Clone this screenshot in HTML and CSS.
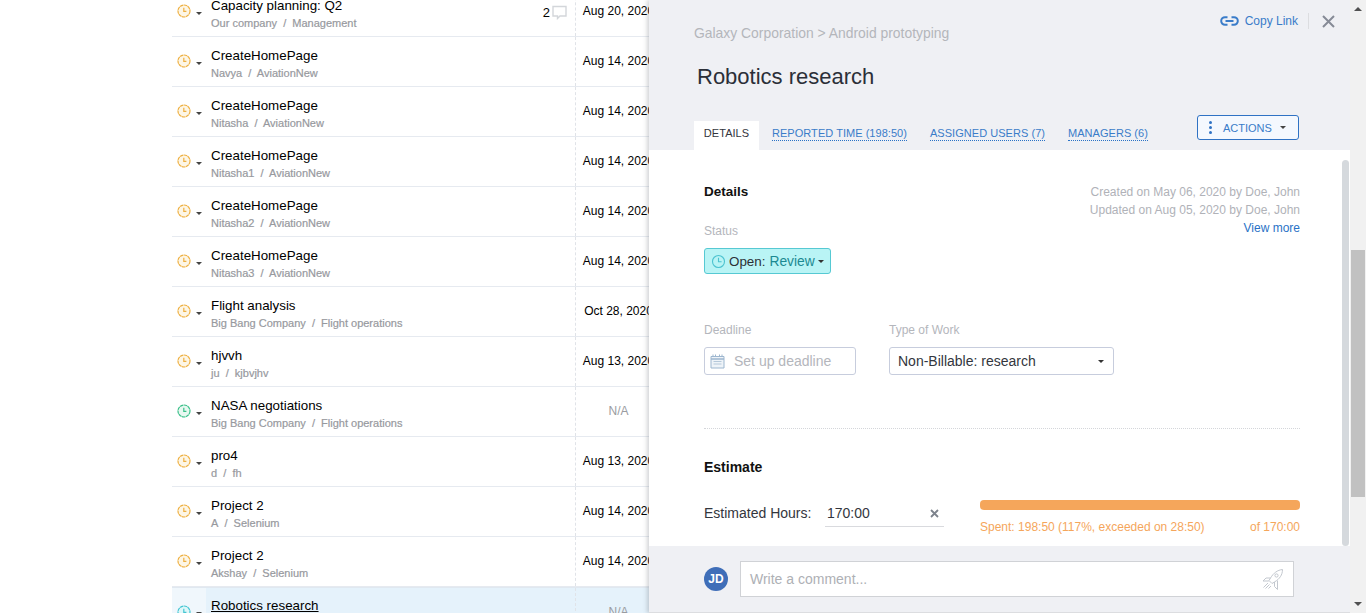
FILE: index.html
```html
<!DOCTYPE html>
<html lang="en">
<head>
<meta charset="utf-8">
<title>Robotics research</title>
<link rel="stylesheet" href="styles.css">
</head>
<body>
<svg class="defs" width="0" height="0" aria-hidden="true">
  <symbol id="clock" viewBox="0 0 14 14">
    <circle cx="7" cy="7" r="6" fill="var(--clock-bg)" stroke="var(--clock)" stroke-width="1.2" stroke-dasharray="3.4 .5"/>
    <path d="M6.8 3.8V7.4H9.4" fill="none" stroke="var(--clock)" stroke-width="1.2"/>
  </symbol>
</svg>
<main class="list">
  <div class="row"><div class="state"><svg class="clock"><use href="#clock"/></svg><i class="caret"></i></div><div class="name"><div class="title">Capacity planning: Q2</div><div class="sub">Our company&nbsp; /&nbsp; Management</div></div><div class="comments">2<svg width="15" height="15" viewBox="0 0 15 15"><path d="M1 1.5H14V11H8L5.5 13.5V11H1Z" fill="none" stroke="#d3d6da" stroke-width="1.4"/></svg></div><div class="date">Aug 20, 2020</div></div>
  <div class="row"><div class="state"><svg class="clock"><use href="#clock"/></svg><i class="caret"></i></div><div class="name"><div class="title">CreateHomePage</div><div class="sub">Navya&nbsp; /&nbsp; AviationNew</div></div><div class="date">Aug 14, 2020</div></div>
  <div class="row"><div class="state"><svg class="clock"><use href="#clock"/></svg><i class="caret"></i></div><div class="name"><div class="title">CreateHomePage</div><div class="sub">Nitasha&nbsp; /&nbsp; AviationNew</div></div><div class="date">Aug 14, 2020</div></div>
  <div class="row"><div class="state"><svg class="clock"><use href="#clock"/></svg><i class="caret"></i></div><div class="name"><div class="title">CreateHomePage</div><div class="sub">Nitasha1&nbsp; /&nbsp; AviationNew</div></div><div class="date">Aug 14, 2020</div></div>
  <div class="row"><div class="state"><svg class="clock"><use href="#clock"/></svg><i class="caret"></i></div><div class="name"><div class="title">CreateHomePage</div><div class="sub">Nitasha2&nbsp; /&nbsp; AviationNew</div></div><div class="date">Aug 14, 2020</div></div>
  <div class="row"><div class="state"><svg class="clock"><use href="#clock"/></svg><i class="caret"></i></div><div class="name"><div class="title">CreateHomePage</div><div class="sub">Nitasha3&nbsp; /&nbsp; AviationNew</div></div><div class="date">Aug 14, 2020</div></div>
  <div class="row"><div class="state"><svg class="clock"><use href="#clock"/></svg><i class="caret"></i></div><div class="name"><div class="title">Flight analysis</div><div class="sub">Big Bang Company&nbsp; /&nbsp; Flight operations</div></div><div class="date">Oct 28, 2020</div></div>
  <div class="row"><div class="state"><svg class="clock"><use href="#clock"/></svg><i class="caret"></i></div><div class="name"><div class="title">hjvvh</div><div class="sub">ju&nbsp; /&nbsp; kjbvjhv</div></div><div class="date">Aug 13, 2020</div></div>
  <div class="row"><div class="state"><svg class="clock green"><use href="#clock"/></svg><i class="caret"></i></div><div class="name"><div class="title">NASA negotiations</div><div class="sub">Big Bang Company&nbsp; /&nbsp; Flight operations</div></div><div class="date muted">N/A</div></div>
  <div class="row"><div class="state"><svg class="clock"><use href="#clock"/></svg><i class="caret"></i></div><div class="name"><div class="title">pro4</div><div class="sub">d&nbsp; /&nbsp; fh</div></div><div class="date">Aug 13, 2020</div></div>
  <div class="row"><div class="state"><svg class="clock"><use href="#clock"/></svg><i class="caret"></i></div><div class="name"><div class="title">Project 2</div><div class="sub">A&nbsp; /&nbsp; Selenium</div></div><div class="date">Aug 14, 2020</div></div>
  <div class="row"><div class="state"><svg class="clock"><use href="#clock"/></svg><i class="caret"></i></div><div class="name"><div class="title">Project 2</div><div class="sub">Akshay&nbsp; /&nbsp; Selenium</div></div><div class="date">Aug 14, 2020</div></div>
  <div class="row selected"><div class="state"><svg class="clock teal"><use href="#clock"/></svg><i class="caret"></i></div><div class="name"><div class="title">Robotics research</div><div class="sub">Galaxy Corporation&nbsp; /&nbsp; Android prototyping</div></div><div class="date muted">N/A</div></div>
</main>

<aside class="panel">
  <header class="top">
    <div class="top-actions">
      <a class="copy">
        <svg width="19" height="10" viewBox="0 0 19 10"><path d="M7.5 1.2H5a3.8 3.8 0 0 0 0 7.6h2.5M11.5 1.2H14a3.8 3.8 0 0 1 0 7.6h-2.5M5.5 5h8" fill="none" stroke="#3a7cc9" stroke-width="2"/></svg>
        Copy Link
      </a>
      <span class="sep"></span>
      <svg class="close" width="13" height="13" viewBox="0 0 13 13"><path d="M1 1L12 12M12 1L1 12" stroke="#868b96" stroke-width="2"/></svg>
    </div>
    <div class="crumb">Galaxy Corporation &gt; Android prototyping</div>
    <h1>Robotics research</h1>
    <nav class="tabs">
      <span class="tab active">Details</span>
      <a class="tab">Reported time (198:50)</a>
      <a class="tab">Assigned users (7)</a>
      <a class="tab">Managers (6)</a>
      <button class="actions"><span class="dots"><b></b><b></b><b></b></span><span>ACTIONS</span><i class="caret"></i></button>
    </nav>
  </header>

  <section class="body">
    <div class="thumb"></div>
    <div class="details-head">
      <div>
        <h2>Details</h2>
        <div class="label status-label">Status</div>
        <div class="status">
          <svg width="15" height="15" viewBox="0 0 15 15"><circle cx="7.5" cy="7.5" r="6" fill="none" stroke="#4cc3d0" stroke-width="1.1"/><path d="M7.5 3.8V7.8H10.6" fill="none" stroke="#4cc3d0" stroke-width="1.1"/></svg>
          <span class="open">Open:</span><span class="review">Review</span><i class="caret small"></i>
        </div>
      </div>
      <div class="meta">
        <div>Created on May 06, 2020 by Doe, John</div>
        <div>Updated on Aug 05, 2020 by Doe, John</div>
        <a>View more</a>
      </div>
    </div>

    <div class="fields">
      <div>
        <div class="label">Deadline</div>
        <div class="input deadline">
          <svg width="15" height="15" viewBox="0 0 15 15"><path d="M1 2.5H14V14H1Z" fill="#eef3f8" stroke="#9db6cf"/><path d="M1 5H14" stroke="#9db6cf" stroke-width="1.5"/><path d="M3 .5V3M5.5 .5V3M9.5 .5V3M12 .5V3" stroke="#9db6cf"/><path d="M3.5 7.5H11.5M3.5 10H11.5" stroke="#b5c8da"/></svg>
          <span>Set up deadline</span>
        </div>
      </div>
      <div>
        <div class="label">Type of Work</div>
        <div class="input work"><span>Non-Billable: research</span><i class="caret small"></i></div>
      </div>
    </div>

    <hr class="rule">

    <h2 class="estimate-title">Estimate</h2>
    <div class="estimate">
      <span class="est-label">Estimated Hours:</span>
      <div class="est-input"><span>170:00</span><svg width="9" height="9" viewBox="0 0 9 9"><path d="M1 1L8 8M8 1L1 8" stroke="#7d838c" stroke-width="1.8"/></svg></div>
      <div class="progress">
        <div class="bar"></div>
        <div class="spent"><span>Spent: 198:50 (117%, exceeded on 28:50)</span><span>of 170:00</span></div>
      </div>
    </div>
  </section>

  <footer class="foot">
    <div class="avatar">JD</div>
    <div class="comment">
      <span>Write a comment...</span>
      <svg width="22" height="22" viewBox="0 0 22 22" fill="none" stroke="#c3c8cf" stroke-width="1"><path d="M20.5 1.5C15.5 2 11.5 5 8.5 10L7 12.5L10 15.5L12.5 14C17.5 11 20.5 7 20.5 1.5Z"/><circle cx="14.5" cy="7.5" r="1.6"/><path d="M8.5 10H4L1 13H6.8M12.5 14V18.5L15.5 21.5V12.6M6 15L1.5 19.5M7.5 16.5L3.5 20.5M9 18L6.5 20.5"/></svg>
    </div>
  </footer>
</aside>

<div class="scrollbar">
  <i class="arrow up"></i>
  <div class="track"><div class="page-thumb"></div></div>
  <i class="arrow down"></i>
</div>
</body>
</html>
```

FILE: styles.css
```css
* { box-sizing: border-box; }
html, body { height: 100%; }
body {
  margin: 0;
  overflow: hidden;
  background: #fff;
  color: #000;
  font-family: "Liberation Sans", Arial, sans-serif;
  font-size: 12px;
}
.defs { position: absolute; }
a { color: inherit; }

/* background list */
.list { margin: -13px 0 0 172px; width: 477px; }
.row {
  display: flex;
  height: 50px;
  border-bottom: 1px solid #e6eaf0;
  overflow: hidden;
  width: 489px;
}
.state {
  --clock: #eeb042;
  --clock-bg: #fdf6e6;
  width: 34px;
  flex: none;
  display: flex;
  align-items: center;
  padding: 0 0 0 5px;
  margin-top: 0;
}
.clock { width: 14px; height: 14px; flex: none; margin-top: -1px; }
.clock.green { --clock: #3cc08a; --clock-bg: #e8f8f1; }
.clock.teal { --clock: #45c6d3; --clock-bg: #dff7f9; }
.caret {
  display: inline-block;
  width: 0;
  height: 0;
  border: 3px solid transparent;
  border-top: 3px solid #444;
  border-bottom: 0;
  margin-left: 5px;
  flex: none;
}
.state .caret { margin-top: 3px; }
.name { flex: 1; min-width: 0; padding: 10px 0 0 5px; }
.title { font-size: 13.35px; line-height: 17px; }
.sub { font-size: 11px; line-height: 13px; margin-top: 3px; color: #97999e; -webkit-text-stroke: .2px #97999e; }
.comments { display: flex; gap: 2px; align-items: flex-start; font-size: 13px; padding: 18px 8px 0 0; line-height: 15px; }
.date {
  width: 86px;
  flex: none;
  text-align: center;
  border-left: 1px dashed #e0e3e8;
  line-height: 49px;
  font-size: 12px;
  white-space: nowrap;
}
.date.muted { color: #9a9ca1; }
.row.selected { background: #e5f2fb; border-top: 1px solid #e0e8f0; }
.row.selected .state { background: #f0f7fc; }
.row.selected .title { text-decoration: underline; }
.row.selected .name { padding-top: 9px; }

/* side panel */
.panel {
  position: absolute;
  top: 0;
  bottom: 0;
  left: 649px;
  right: 16px;
  display: flex;
  flex-direction: column;
  background: #eff0f4;
  box-shadow: -2px 0 4px rgba(80, 85, 95, .25);
  border-bottom: 1px solid #dcdde0;
}
.top { height: 150px; flex: none; position: relative; padding: 25px 0 0 45px; }
.top-actions {
  position: absolute;
  top: 13px;
  right: 15px;
  display: flex;
  align-items: center;
  height: 16px;
}
.copy { display: flex; align-items: center; gap: 6px; color: #3a7cc9; font-size: 12px; }
.sep { width: 1px; height: 16px; background: #dcdde0; margin: 0 13px 0 10px; }
.crumb { font-size: 13.9px; line-height: 16px; color: #b4b6bb; }
h1 { margin: 23px 0 0 3px; font-size: 22px; line-height: 26px; font-weight: 400; color: #2b2f38; }
.tabs { position: absolute; left: 45px; right: 51px; bottom: 0; height: 35px; display: flex; align-items: flex-end; }
.tab {
  display: block;
  font-size: 11px;
  line-height: 13px;
  letter-spacing: .04px;
  text-transform: uppercase;
  color: #3a7cc9;
  border-bottom: 1px dotted #2a72c6;
  margin: 0 23px 9px 0;
}
.tab.active {
  background: #fff;
  color: #33363d;
  border: 0;
  height: 29px;
  width: 65px;
  margin: 0 13px 0 0;
  padding-top: 6px;
  text-align: center;
}
.actions {
  position: absolute;
  right: 0;
  top: 0;
  width: 102px;
  height: 25px;
  padding: 0 12px 0 11px;
  display: flex;
  align-items: center;
  background: #f4f8fe;
  border: 1px solid #2f72c4;
  border-radius: 3px;
  color: #3a7cc9;
  font: 11px "Liberation Sans", Arial, sans-serif;
}
.dots { display: flex; flex-direction: column; gap: 2px; margin-right: 11px; }
.dots b { width: 3px; height: 3px; border-radius: 50%; background: #2f72c4; display: block; }
.actions .caret { margin-left: auto; }

.body {
  flex: 1;
  min-height: 0;
  background: #fff;
  position: relative;
  padding: 34px 50px 0 55px;
}
.thumb { position: absolute; top: 10px; bottom: 0; right: 1px; width: 7px; background: #d5d9dd; border-radius: 4px; }
h2 { margin: 0; font-size: 13.5px; line-height: 15px; font-weight: 700; color: #111; }
.label { font-size: 12px; line-height: 14px; color: #b4b6bc; }
.details-head { display: flex; justify-content: space-between; height: 119px; }
.status-label { margin-top: 25px; }
.status {
  margin-top: 10px;
  width: 127px;
  height: 26px;
  display: flex;
  align-items: center;
  padding-left: 6px;
  background: #b9f4f5;
  border: 1px solid #56c9d3;
  border-radius: 3px;
  font-size: 13.4px;
}
.open { margin-left: 3px; color: #2c3036; }
.review { margin-left: 4px; color: #1c8a92; font-size: 13.8px; }
.status .caret { margin-left: 3px; }
.caret.small { border-top-color: #333; }
.meta { text-align: right; font-size: 12px; line-height: 18px; color: #b0b2b8; margin-top: -1px; }
.meta a { color: #2a72c6; }
.fields { display: flex; gap: 33px; margin-top: 20px; }
.fields .label { margin-bottom: 10px; }
.input {
  height: 28px;
  display: flex;
  align-items: center;
  background: #fff;
  border: 1px solid #c7cddd;
  border-radius: 3px;
  font-size: 14px;
}
.deadline { width: 152px; padding-left: 5px; color: #b4b6bc; }
.deadline span { margin-left: 9px; }
.work { width: 225px; padding: 0 9px 0 8px; color: #33363d; justify-content: space-between; }
.rule { border: 0; border-top: 1px dotted #d4d6da; margin: 53px 0 0; }
.estimate-title { margin-top: 31px; font-size: 14px; }
.estimate { display: flex; margin-top: 25px; }
.est-label { font-size: 14px; line-height: 16px; padding-top: 5px; color: #33363d; width: 121px; flex: none; }
.est-input {
  width: 119px;
  height: 27px;
  flex: none;
  display: flex;
  justify-content: space-between;
  align-items: center;
  padding: 0 5px 0 2px;
  border-bottom: 1px solid #d9dade;
  font-size: 14px;
  color: #33363d;
}
.progress { margin-left: 36px; flex: 1; }
.bar { height: 10px; background: #f5a65b; border-radius: 4px; }
.spent { display: flex; justify-content: space-between; margin-top: 10px; font-size: 12px; line-height: 14px; color: #f5a65b; }

.foot { flex: none; height: 66px; display: flex; padding: 15px 56px 0 55px; }
.avatar {
  width: 24px;
  height: 24px;
  margin-top: 6px;
  border-radius: 50%;
  background: #3f6eb8;
  color: #fff;
  font-size: 12px;
  font-weight: 700;
  line-height: 24px;
  text-align: center;
  flex: none;
}
.comment {
  margin-left: 12px;
  flex: 1;
  height: 36px;
  display: flex;
  align-items: center;
  justify-content: space-between;
  padding: 0 9px 0 9px;
  background: #fff;
  border: 1px solid #d0d2d6;
  font-size: 14px;
  color: #aeb0b5;
}

/* page scrollbar */
.scrollbar {
  position: absolute;
  top: 0;
  right: 0;
  bottom: 0;
  width: 16px;
  background: #f1f1f1;
  display: flex;
  flex-direction: column;
  align-items: center;
}
.arrow { width: 0; height: 0; border: 4px solid transparent; border-bottom: 0; flex: none; }
.arrow.up { border-top: 0; border-bottom: 4px solid #505050; margin-top: 7px; }
.arrow.down { border-top: 4px solid #505050; margin-bottom: 7px; }
.track { flex: 1; width: 100%; padding: 239px 1px 0; }
.page-thumb { height: 247px; background: #c1c1c1; }
```
